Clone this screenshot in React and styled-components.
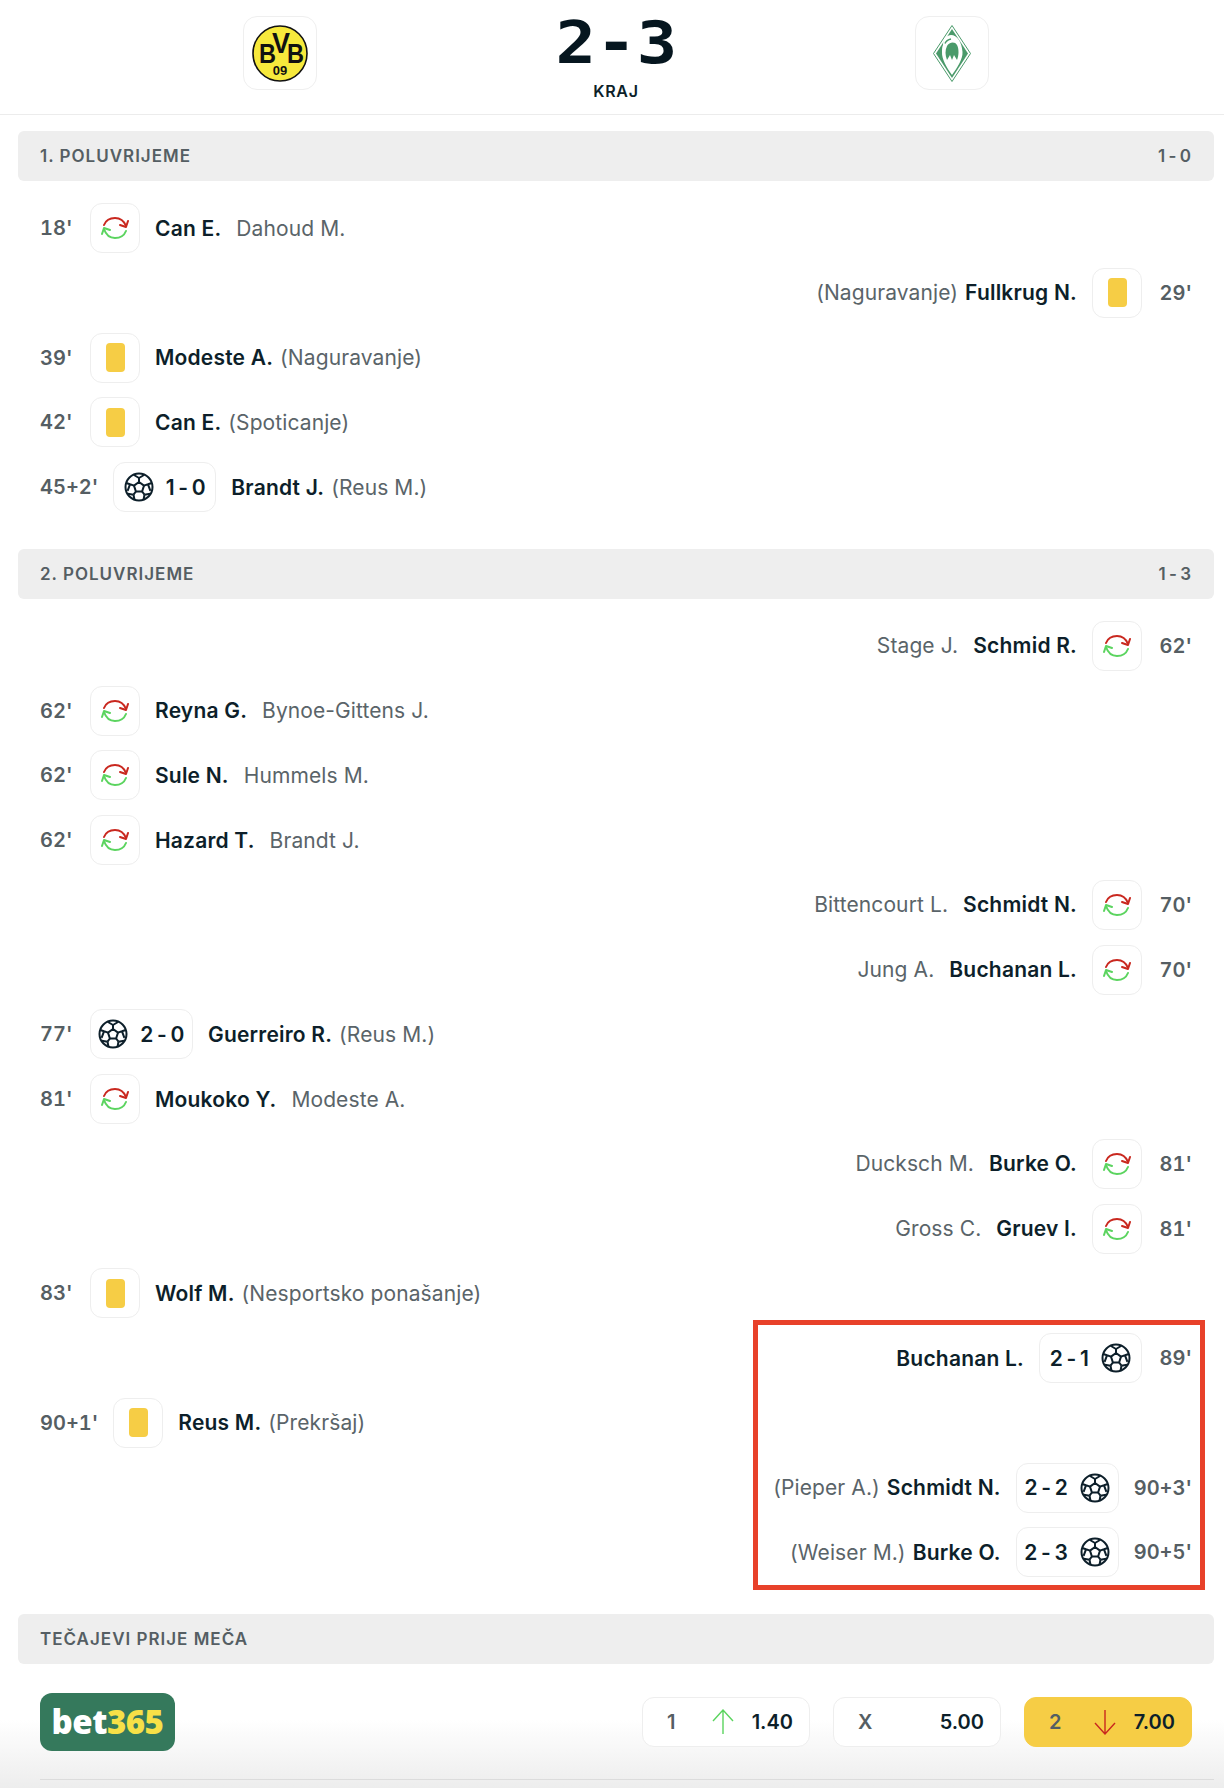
import React from "react";
import styled, { createGlobalStyle } from "styled-components";

const GlobalStyle = createGlobalStyle`
  html, body {
    margin: 0;
    padding: 0;
    background: #fff;
  }
  body {
    font-family: Inter, "Noto Sans", sans-serif;
    color: #0d1f2a;
  }
`;

const Page = styled.div`
  position: relative;
  width: 1224px;
  height: 1788px;
  overflow: hidden;
`;

const Header = styled.header`
  display: flex;
  justify-content: space-between;
  height: 115px;
  padding: 16px 235px 0 243px;
  box-sizing: border-box;
  border-bottom: 1px solid #ececec;
`;

const LogoBox = styled.div`
  width: 74px;
  height: 74px;
  box-sizing: border-box;
  border: 1px solid #efefef;
  border-radius: 14px;
  display: flex;
  align-items: center;
  justify-content: center;
`;

const ScoreBlock = styled.div`
  display: flex;
  flex-direction: column;
  align-items: center;
`;

const BigScore = styled.div`
  font-family: "DejaVu Sans Mono", monospace;
  font-weight: 700;
  font-size: 58px;
  line-height: 44px;
  height: 44px;
  margin-top: 5px;
  color: #06161f;
  white-space: pre;
  transform: scaleX(1.16);
`;

const Status = styled.div`
  margin-top: 16px;
  font-size: 16px;
  line-height: 20px;
  font-weight: 600;
  letter-spacing: 0.7px;
`;

const Section = styled.section`
  margin: 16px 10px 0 18px;

  & + & {
    margin-top: 17px;
  }
`;

const SectionBar = styled.div`
  height: 50px;
  padding: 0 22px;
  border-radius: 6px;
  background: #eeeeee;
  color: #555e63;
  display: flex;
  align-items: center;
  justify-content: space-between;
  font-size: 17px;
  font-weight: 600;
  letter-spacing: 1px;
`;

const BarScore = styled.span`
  word-spacing: -3px;
`;

const Events = styled.div`
  display: flex;
  flex-direction: column;
  gap: 14.75px;
  padding: 22px 22px 19.75px;
`;

const Row = styled.div`
  display: flex;
  flex-direction: ${(p) => (p.$right ? "row-reverse" : "row")};
  align-items: center;
  gap: 15px;
  height: 50px;
  font-size: 21px;
  letter-spacing: 0.2px;
`;

const Minute = styled.span`
  min-width: 35px;
  color: #555e63;
  font-size: 20px;
  font-weight: 600;
  font-variant-numeric: tabular-nums;
  letter-spacing: 0;
  text-align: ${(p) => (p.$right ? "right" : "left")};
`;

const IconCard = styled.div`
  height: 50px;
  width: ${(p) => (p.$score ? "103px" : "50px")};
  box-sizing: border-box;
  border: 1px solid #eeeeee;
  border-radius: 12px;
  display: flex;
  flex-direction: ${(p) => (p.$right ? "row-reverse" : "row")};
  align-items: center;
  justify-content: center;
  gap: 12px;
  font-weight: 600;
  word-spacing: -2px;
`;

const YellowCard = styled.span`
  display: block;
  width: 19px;
  height: 29px;
  border-radius: 4px;
  background: #f6cd45;
`;

const Texts = styled.div`
  display: flex;
  align-items: baseline;
  gap: ${(p) => (p.$wide ? "15px" : "7px")};
`;

const Name = styled.span`
  font-weight: 600;
`;

const Detail = styled.span`
  color: #5a6469;
  letter-spacing: 0.1px;
`;

const OddsArea = styled.div`
  margin: 0 -10px 0 -18px;
  height: 124px;
  background: linear-gradient(#fff 45%, #ededed 100%);
`;

const OddsRow = styled.div`
  display: flex;
  align-items: center;
  justify-content: space-between;
  height: 116px;
  margin: 0 10px 0 40px;
  padding-right: 22px;
  box-sizing: border-box;
  border-bottom: 1px solid #dcdcdc;
`;

const Bookie = styled.div`
  width: 135px;
  height: 58px;
  border-radius: 12px;
  background: #35795c;
  color: #fff;
  display: flex;
  align-items: center;
  justify-content: center;
  font-family: "Open Sans", sans-serif;
  font-weight: 800;
  font-size: 33px;
  letter-spacing: -0.5px;
`;

const BookieNum = styled.span`
  color: #f7e047;
`;

const OddsList = styled.div`
  display: flex;
  gap: 23px;
`;

const Odd = styled.div`
  width: 168px;
  height: 50px;
  box-sizing: border-box;
  padding: 0 16px 0 24px;
  border: 1px solid ${(p) => (p.$active ? "#f6cd45" : "#eeeeee")};
  border-radius: 12px;
  background: ${(p) => (p.$active ? "#f6cd45" : "#fff")};
  display: flex;
  align-items: center;
  justify-content: space-between;
  font-size: 20px;
  font-weight: 600;
`;

const OddLabel = styled.span`
  color: #555e63;
  min-width: 28px;
`;

const Highlight = styled.div`
  position: absolute;
  left: 753px;
  top: 1320px;
  width: 452px;
  height: 270px;
  box-sizing: border-box;
  border: 5px solid #e8412a;
`;

function SubIcon() {
  return (
    <svg width="28" height="24" viewBox="0 0 28 24" fill="none" strokeWidth="2" strokeLinecap="round" strokeLinejoin="round">
      <g stroke="#c9281f">
        <path d="M3 9C5 4 9 2 14 2c5 0 9 3 11 8" />
        <path d="M19 9l6 2 2-6" />
      </g>
      <g stroke="#5bd45f">
        <path d="M25 15c-2 5-6 7-11 7-5 0-9-3-11-9" />
        <path d="M9 14l-6-2-2 6" />
      </g>
    </svg>
  );
}

function BallIcon() {
  return (
    <svg width="30" height="30" viewBox="0 0 30 30" fill="none" stroke="#0d1f2a" strokeWidth="2" strokeLinejoin="round">
      <circle cx="15" cy="15" r="13.5" />
      <path d="M15 10l5 3.6-1.9 5.9h-6.2L10 13.6z" />
      <path d="M15 10V6M20 13.6l4-1.3M18.1 19.5l2.4 3.2M11.9 19.5l-2.4 3.2M10 13.6l-4-1.3" />
      <path d="M10 3l5 3 5-3M24 12.3l3.8-1.3M24 12.3l2.4 6.5M20.5 22.7l5.6-.9M20.5 22.7l-1 5M9.5 22.7l1 5M9.5 22.7l-5.6-.9M6 12.3l-2.4 6.5M6 12.3L2.200 11" />
    </svg>
  );
}

function Arrow({ up }) {
  return (
    <svg width="24" height="26" viewBox="0 0 24 26" fill="none" stroke={up ? "#5bd45f" : "#c9281f"} strokeWidth="1.4">
      {up ? <path d="M12 25V1M2 12L12 1l10 11" /> : <path d="M12 1v24M2 14l10 11 10-11" />}
    </svg>
  );
}

function BvbLogo() {
  return (
    <svg width="56" height="57" viewBox="0 0 56 57" fontFamily="Liberation Sans" fontWeight="700" fill="#111">
      <ellipse cx="28" cy="28.500" rx="27" ry="27.500" fill="#f7e93c" stroke="#111" strokeWidth="1.6" />
      <text x="7" y="38" fontSize="28" textLength="17" lengthAdjust="spacingAndGlyphs">B</text>
      <text x="20" y="28" fontSize="29" textLength="18" lengthAdjust="spacingAndGlyphs">V</text>
      <text x="35" y="38" fontSize="28" textLength="17" lengthAdjust="spacingAndGlyphs">B</text>
      <text x="28" y="50" textAnchor="middle" fontSize="13">09</text>
    </svg>
  );
}

function WerderLogo() {
  return (
    <svg width="38" height="57" viewBox="0 0 38 57">
      <path d="M19 0.5L37.500 28.500 19 56.500 0.500 28.500z" fill="#fff" stroke="#4a9a6a" />
      <path d="M19 4L35 28.500 19 53 3 28.500z" fill="#4a9a6a" />
      <path
        fill="#fff"
        fillRule="evenodd"
        d="M10 20C10 14 14 10 18 10 24 10 29 17 29.500 27 30 34 24 43 19 50 14 43 8.500 34 9 27 9 24 9 22 10 20zM14 21C16 17 22 16 24 20 26 24 26 30 24 35L21 30 19 35 17 30 14 35C12 30 12 25 14 21z"
      />
      <path d="M12 18.500C13 16 15.500 14.500 18 14" stroke="#4a9a6a" strokeWidth="1.500" fill="none" />
    </svg>
  );
}

const firstHalf = [
  { min: "18'", type: "sub", name: "Can E.", detail: "Dahoud M." },
  { min: "29'", type: "card", name: "Fullkrug N.", detail: "(Naguravanje)", right: true },
  { min: "39'", type: "card", name: "Modeste A.", detail: "(Naguravanje)" },
  { min: "42'", type: "card", name: "Can E.", detail: "(Spoticanje)" },
  { min: "45+2'", type: "goal", score: "1 - 0", name: "Brandt J.", detail: "(Reus M.)" },
];

const secondHalf = [
  { min: "62'", type: "sub", name: "Schmid R.", detail: "Stage J.", right: true },
  { min: "62'", type: "sub", name: "Reyna G.", detail: "Bynoe-Gittens J." },
  { min: "62'", type: "sub", name: "Sule N.", detail: "Hummels M." },
  { min: "62'", type: "sub", name: "Hazard T.", detail: "Brandt J." },
  { min: "70'", type: "sub", name: "Schmidt N.", detail: "Bittencourt L.", right: true },
  { min: "70'", type: "sub", name: "Buchanan L.", detail: "Jung A.", right: true },
  { min: "77'", type: "goal", score: "2 - 0", name: "Guerreiro R.", detail: "(Reus M.)" },
  { min: "81'", type: "sub", name: "Moukoko Y.", detail: "Modeste A." },
  { min: "81'", type: "sub", name: "Burke O.", detail: "Ducksch M.", right: true },
  { min: "81'", type: "sub", name: "Gruev I.", detail: "Gross C.", right: true },
  { min: "83'", type: "card", name: "Wolf M.", detail: "(Nesportsko ponašanje)" },
  { min: "89'", type: "goal", score: "2 - 1", name: "Buchanan L.", right: true },
  { min: "90+1'", type: "card", name: "Reus M.", detail: "(Prekršaj)" },
  { min: "90+3'", type: "goal", score: "2 - 2", name: "Schmidt N.", detail: "(Pieper A.)", right: true },
  { min: "90+5'", type: "goal", score: "2 - 3", name: "Burke O.", detail: "(Weiser M.)", right: true },
];

function EventRow({ min, type, score, name, detail, right }) {
  return (
    <Row $right={right}>
      <Minute $right={right}>{min}</Minute>
      <IconCard $right={right} $score={type === "goal"}>
        {type === "sub" && <SubIcon />}
        {type === "card" && <YellowCard />}
        {type === "goal" && (
          <>
            <BallIcon />
            <span>{score}</span>
          </>
        )}
      </IconCard>
      <Texts $wide={type === "sub"}>
        {right && detail && <Detail>{detail}</Detail>}
        <Name>{name}</Name>
        {!right && detail && <Detail>{detail}</Detail>}
      </Texts>
    </Row>
  );
}

export default function App() {
  return (
    <Page>
      <GlobalStyle />
      <Header>
        <LogoBox>
          <BvbLogo />
        </LogoBox>
        <ScoreBlock>
          <BigScore>2-3</BigScore>
          <Status>KRAJ</Status>
        </ScoreBlock>
        <LogoBox>
          <WerderLogo />
        </LogoBox>
      </Header>

      <Section>
        <SectionBar>
          <span>1. POLUVRIJEME</span>
          <BarScore>1 - 0</BarScore>
        </SectionBar>
        <Events>
          {firstHalf.map((e, i) => (
            <EventRow key={i} {...e} />
          ))}
        </Events>
      </Section>

      <Section>
        <SectionBar>
          <span>2. POLUVRIJEME</span>
          <BarScore>1 - 3</BarScore>
        </SectionBar>
        <Events>
          {secondHalf.map((e, i) => (
            <EventRow key={i} {...e} />
          ))}
        </Events>
      </Section>

      <Section>
        <SectionBar>
          <span>TEČAJEVI PRIJE MEČA</span>
        </SectionBar>
        <OddsArea>
          <OddsRow>
            <Bookie>
              bet<BookieNum>365</BookieNum>
            </Bookie>
            <OddsList>
              <Odd>
                <OddLabel>1</OddLabel>
                <Arrow up />
                <span>1.40</span>
              </Odd>
              <Odd>
                <OddLabel>X</OddLabel>
                <span>5.00</span>
              </Odd>
              <Odd $active>
                <OddLabel>2</OddLabel>
                <Arrow />
                <span>7.00</span>
              </Odd>
            </OddsList>
          </OddsRow>
        </OddsArea>
      </Section>

      <Highlight />
    </Page>
  );
}
